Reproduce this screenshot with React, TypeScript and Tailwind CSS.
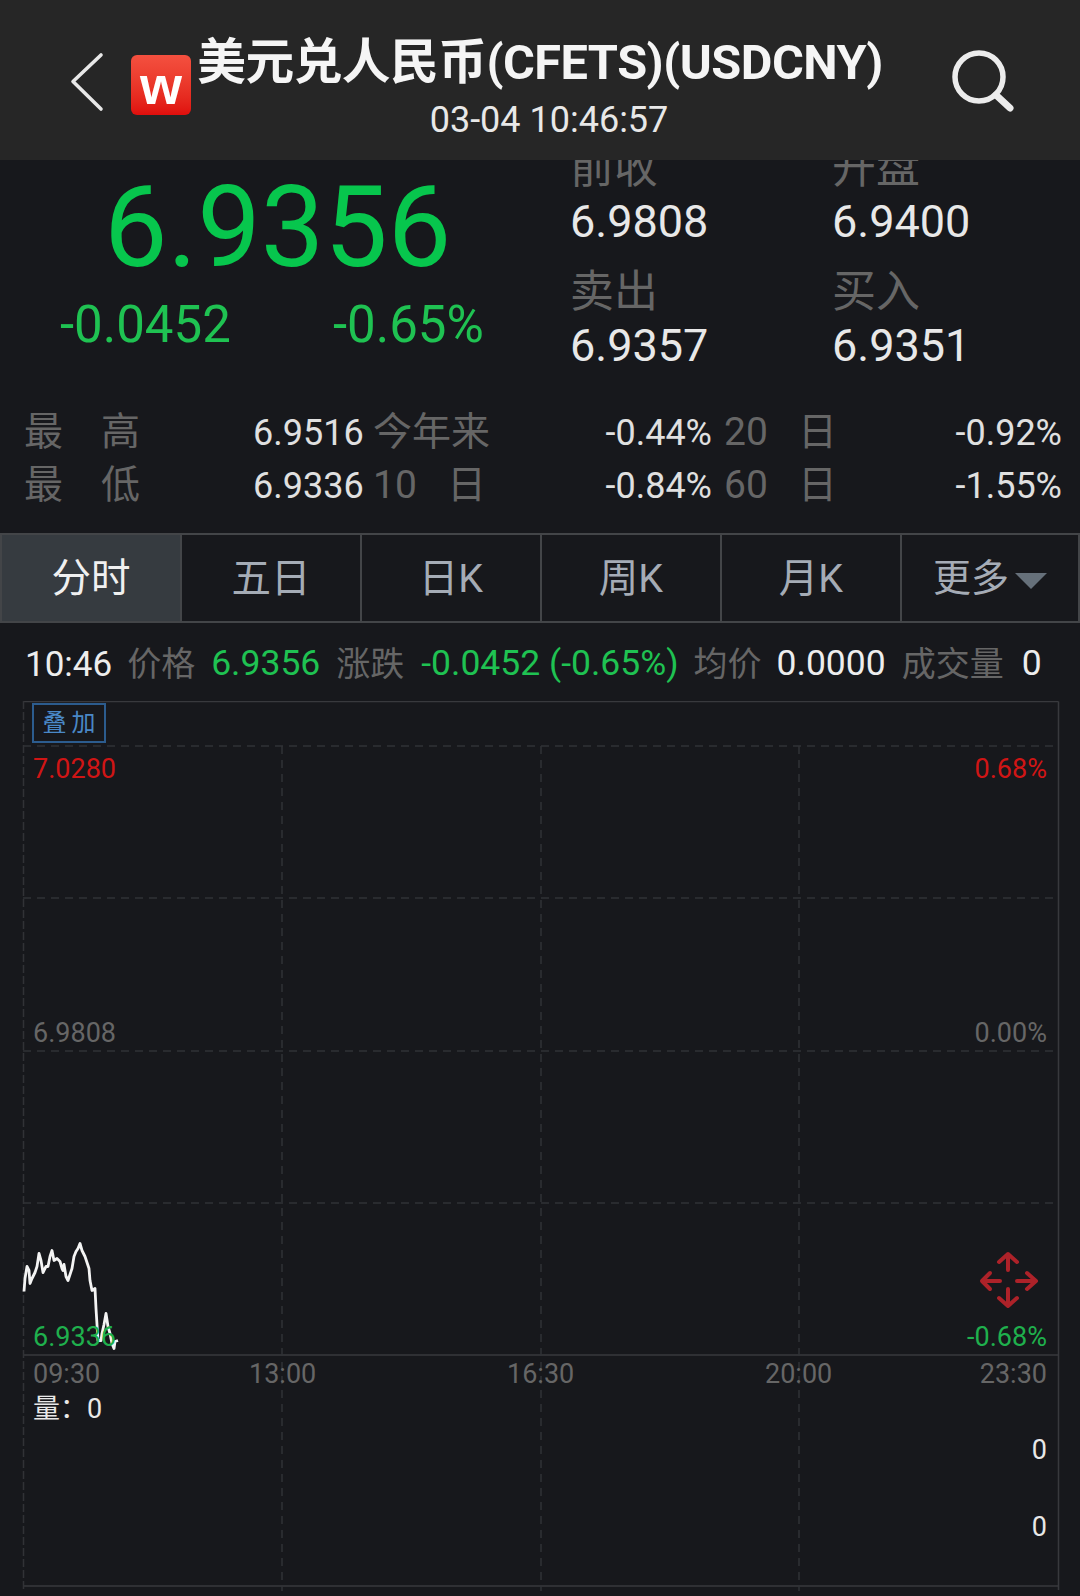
const CJK = "font-['Roboto','Noto_Sans_CJK_SC',sans-serif]";

function Chart() {
  const line =
    "24,1293 25,1280 27,1268 29,1272 30,1285 32,1280 35,1274 37,1268 39,1255 41,1262 43,1274 46,1268 48,1268 50,1258 52,1252 54,1262 57,1260 60,1263 62,1270 63,1272 64,1266 66,1278 68,1282 70,1276 72,1270 74,1258 76,1253 78,1250 80,1245 82,1252 85,1258 87,1264 89,1270 90,1282 92,1292 95,1290 96,1310 98,1342 101,1342 102,1335 104,1326 106,1315 108,1328 110,1335 112,1345 114,1350 115,1343 118,1342";
  const h = [746, 898, 1051, 1203];
  const v = [282, 541, 799];
  return (
    <svg className="absolute left-0 top-[-701px] h-[1596px] w-[1080px]" viewBox="0 0 1080 1596">
      <g stroke="#313236" strokeWidth="1.5" fill="none">
        <path d="M23.5 701.5H1058.5M1058.5 701.5V1590M23 1355H1059M23 1586H1059" stroke="#38393d" />
        <path d="M23.5 701V1590" strokeDasharray="8 3" />
        {h.map((y) => (
          <path key={y} d={`M23 ${y}H1059`} strokeDasharray="8 6" />
        ))}
        {v.map((x) => (
          <path key={x} d={`M${x} 746V1591`} strokeDasharray="8 6" />
        ))}
      </g>
      <polyline
        points={line}
        fill="none"
        stroke="#f4f4f4"
        strokeWidth="2.8"
        strokeLinejoin="round"
        transform="translate(0 -1.5)"
      />
      <g stroke="#ad2229" strokeWidth="4" fill="none" strokeLinejoin="round" strokeLinecap="round">
        <path d="M1008 1270V1254M999 1262L1008 1254L1017 1262" />
        <path d="M1008 1289V1306M999 1298L1008 1306L1017 1298" />
        <path d="M1000 1281H983M990 1273L982 1281L990 1289" />
        <path d="M1017 1281H1035M1027 1273L1036 1281L1027 1289" />
      </g>
    </svg>
  );
}

const Label = ({ c, text, pos }: { c: string; text: string; pos: string }) => (
  <span className={`absolute text-[27px] leading-none ${c} ${pos}`}>{text}</span>
);

function Stat({ label, value }: { label: string; value: string }) {
  return (
    <div className="flex w-[262px] flex-col">
      <span className="text-[44px] leading-[52px] text-[#666666]">{label}</span>
      <span className="text-[45px] leading-[56px] text-[#e8e8e8]">{value}</span>
    </div>
  );
}

function Row({ a, b, c, d, e, f }: { a: [string, string]; b: string; c: string[]; d: string; e: string[]; f: string }) {
  return (
    <div className="flex h-[53px] items-center leading-none text-[#666666]">
      <span className="ml-[24px] flex w-[116px] justify-between text-[39px]">
        <span>{a[0]}</span>
        <span>{a[1]}</span>
      </span>
      <span className="ml-[113px] w-[120px] text-[36px] text-[#e0e0e0]">{b}</span>
      <span className="flex w-[113px] justify-between text-[39px]">
        {c.map((x) => (
          <span key={x}>{x}</span>
        ))}
      </span>
      <span className="w-[226px] text-right text-[36px] text-[#e0e0e0]">{d}</span>
      <span className="ml-[12px] flex w-[113px] justify-between text-[39px]">
        {e.map((x) => (
          <span key={x}>{x}</span>
        ))}
      </span>
      <span className="w-[225px] text-right text-[36px] text-[#e0e0e0]">{f}</span>
    </div>
  );
}

export default function App() {
  const tabs = ["分时", "五日", "日K", "周K", "月K"];
  return (
    <div className={`relative h-[1596px] w-[1080px] overflow-hidden bg-[#17181c] ${CJK}`}>
      <header className="relative z-10 flex h-[160px] items-start bg-[#262626]">
        <svg className="ml-[70px] mt-[52px] h-[60px] w-[34px]" viewBox="0 0 34 60" fill="none">
          <path d="M31 3L3 29.5L31 57" stroke="#e8e8e8" strokeWidth="3.6" strokeLinecap="round" strokeLinejoin="round" />
        </svg>
        <div className="ml-[27px] mt-[55px] flex h-[60px] w-[60px] items-center justify-center rounded-[6px] bg-gradient-to-b from-[#f4503f] to-[#e00d0c]">
          <span className="font-['Liberation_Sans',sans-serif] text-[54px] font-bold leading-none text-white">w</span>
        </div>
        <div className="ml-[4px] flex w-[690px] flex-col items-center">
          <span className="mt-[33px] whitespace-nowrap text-[48.7px] font-bold leading-[60px] tracking-[-0.5px] text-[#f5f5f5]">
            美元兑人民币(CFETS)(USDCNY)
          </span>
          <span className="ml-[18px] mt-[6px] text-[36px] leading-[42px] text-[#e8e8e8]">03-04 10:46:57</span>
        </div>
        <svg className="ml-[67px] mt-[48px] h-[66px] w-[62px]" viewBox="0 0 62 66" fill="none">
          <circle cx="27" cy="29" r="24" stroke="#ececec" strokeWidth="5.5" />
          <path d="M44 47L58 60" stroke="#ececec" strokeWidth="7" strokeLinecap="round" />
        </svg>
      </header>

      <section className="relative flex h-[372px] overflow-hidden">
        <div className="flex w-[570px] shrink-0 flex-col">
          <div className="mt-[11px] pl-[104px] text-[113px] leading-[114px] text-[#07c64d]">6.9356</div>
          <div className="mt-[12px] flex text-[51px] leading-[56px] text-[#1fc252]">
            <span className="ml-[60px] w-[273px]">-0.0452</span>
            <span>-0.65%</span>
          </div>
        </div>
        <div className="-mt-[18px] flex flex-col">
          <div className="flex">
            <Stat label="前收" value="6.9808" />
            <Stat label="开盘" value="6.9400" />
          </div>
          <div className="mt-[16px] flex">
            <Stat label="卖出" value="6.9357" />
            <Stat label="买入" value="6.9351" />
          </div>
        </div>
      </section>

      <div className="absolute left-0 top-[406px] w-full">
        <Row a={["最", "高"]} b="6.9516" c={["今", "年", "来"]} d="-0.44%" e={["20", "日"]} f="-0.92%" />
        <Row a={["最", "低"]} b="6.9336" c={["10", "日"]} d="-0.84%" e={["60", "日"]} f="-1.55%" />
      </div>

      <nav className="absolute left-0 top-[533px] flex h-[90px] w-full border-y-2 border-l-2 border-[#434548]">
        {tabs.map((t, i) => (
          <div
            key={t}
            className={`flex h-full w-[180px] items-center justify-center border-r-2 border-[#434548] pt-[1px] text-[39.5px] ${
              i === 0 ? "bg-[#363b40] text-[#f0f0f0]" : "text-[#a5acb6]"
            }`}
          >
            {t}
          </div>
        ))}
        <div className="flex h-full flex-1 items-center justify-center gap-[6px] border-r-2 border-[#434548] text-[38px] text-[#a5acb6]">
          更多
          <svg className="mt-[6px] h-[18px] w-[32px]" viewBox="0 0 32 18">
            <path d="M0 1H32L16 17Z" fill="#66707a" />
          </svg>
        </div>
      </nav>

      <div className="absolute left-[25px] top-[641px] flex h-[46px] items-center whitespace-nowrap text-[35.5px] leading-none">
        <span className="text-[35px] text-[#ededed]">10:46</span>
        <span className="ml-[15px] text-[34px] text-[#666666]">价格</span>
        <span className="ml-[16px] text-[#1fc252]">6.9356</span>
        <span className="ml-[16px] text-[34px] text-[#666666]">涨跌</span>
        <span className="ml-[17px] text-[#1fc252]">-0.0452 (-0.65%)</span>
        <span className="ml-[15px] text-[34px] text-[#666666]">均价</span>
        <span className="ml-[15px] text-[#ededed]">0.0000</span>
        <span className="ml-[16px] text-[34px] text-[#666666]">成交量</span>
        <span className="ml-[18px] text-[#ededed]">0</span>
      </div>

      <div className="absolute left-0 top-[701px] h-[895px] w-full overflow-hidden">
        <Chart />
        <div className="absolute left-[32px] top-[2px] flex h-[40px] w-[74px] items-center justify-center border-2 border-[#2c5c8e] pl-[5px] text-[24px] leading-none tracking-[5px] text-[#4a88c7]">
          叠加
        </div>
        <Label c="text-[#d01515]" text="7.0280" pos="left-[33px] top-[55px]" />
        <Label c="text-[#d01515]" text="0.68%" pos="right-[33px] top-[55px]" />
        <Label c="text-[#666666]" text="6.9808" pos="left-[33px] top-[319px]" />
        <Label c="text-[#666666]" text="0.00%" pos="right-[33px] top-[319px]" />
        <Label c="text-[#1fb04d]" text="6.9336" pos="left-[33px] top-[623px]" />
        <Label c="text-[#1fb04d]" text="-0.68%" pos="right-[33px] top-[623px]" />
        <Label c="text-[#666666]" text="09:30" pos="left-[33px] top-[660px]" />
        <Label c="text-[#666666]" text="13:00" pos="left-[249px] top-[660px]" />
        <Label c="text-[#666666]" text="16:30" pos="left-[507px] top-[660px]" />
        <Label c="text-[#666666]" text="20:00" pos="left-[765px] top-[660px]" />
        <Label c="text-[#666666]" text="23:30" pos="right-[33px] top-[660px]" />
        <div className="absolute left-[33px] top-[695px] flex text-[27px] leading-none text-[#e8e8e8]">
          <span className="w-[54px]">量：</span>
          <span>0</span>
        </div>
        <Label c="text-[#e8e8e8]" text="0" pos="right-[33px] top-[736px]" />
        <Label c="text-[#e8e8e8]" text="0" pos="right-[33px] top-[813px]" />
      </div>
    </div>
  );
}
